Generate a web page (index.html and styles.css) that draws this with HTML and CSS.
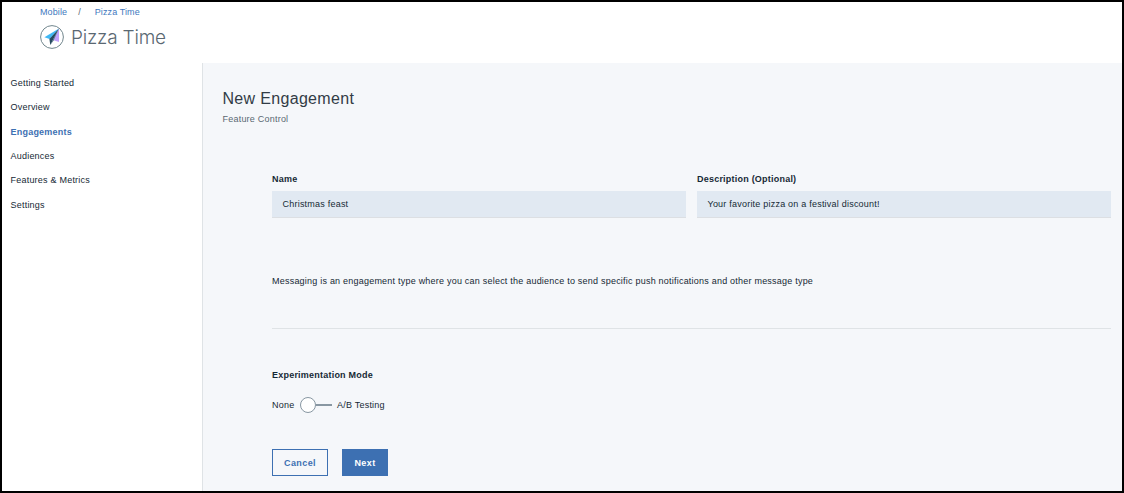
FILE: index.html
```html
<!DOCTYPE html>
<html lang="en">
<head>
<meta charset="utf-8">
<title>Pizza Time</title>
<link rel="stylesheet" href="styles.css">
</head>
<body>
<div class="app">
  <header class="header">
    <nav class="breadcrumb"><a>Mobile</a><span class="slash">/</span><a>Pizza Time</a></nav>
    <div class="brand">
      <svg class="logo" viewBox="0 0 24 24" width="24" height="24">
        <circle cx="12" cy="12" r="11.4" fill="#fff" stroke="#71868d" stroke-width="1"/>
        <path d="M19 3.4V17L13.5 15.2Z" fill="#c0a0fb"/>
        <path d="M19 3.4L4.4 12.3L9.6 14Z" fill="#3fb8f5"/>
        <path d="M19 3.4L9.4 14L10.3 20Z" fill="#264a60"/>
        <path d="M19 3.4L10.3 20L13.6 15.4Z" fill="#40647c"/>
      </svg>
      <h1 class="app-name">Pizza Time</h1>
    </div>
  </header>
  <div class="body">
    <ul class="sidebar">
      <li>Getting Started</li>
      <li>Overview</li>
      <li class="active">Engagements</li>
      <li>Audiences</li>
      <li>Features &amp; Metrics</li>
      <li>Settings</li>
    </ul>
    <main class="main">
      <h2 class="title">New Engagement</h2>
      <p class="subtitle">Feature Control</p>
      <form class="form">
        <div class="fields">
          <div class="field"><label class="label">Name</label><div class="input">Christmas feast</div></div>
          <div class="field"><label class="label">Description (Optional)</label><div class="input">Your favorite pizza on a festival discount!</div></div>
        </div>
        <p class="info">Messaging is an engagement type where you can select the audience to send specific push notifications and other message type</p>
        <div class="label mode">Experimentation Mode</div>
        <div class="toggle"><span>None</span><span class="switch"><i class="knob"></i><i class="track"></i></span><span>A/B Testing</span></div>
        <div class="actions"><button type="button" class="btn cancel">Cancel</button><button type="button" class="btn next">Next</button></div>
      </form>
    </main>
  </div>
</div>
</body>
</html>
```
FILE: styles.css
```css
* { box-sizing: border-box; margin: 0; padding: 0; }
body { font: 9px/12px "Liberation Sans", Arial, sans-serif; letter-spacing: 0.22px; color: #152935; background: #fff; }
.app { width: 1124px; height: 493px; border: 2px solid #000; display: flex; flex-direction: column; overflow: hidden; }
.header { height: 61px; padding: 4px 0 0 38px; }
.breadcrumb { display: flex; letter-spacing: 0.1px; color: #4178be; }
.slash { margin: 0 14px 0 11px; color: #5a6872; }
.brand { display: flex; align-items: center; margin-top: 7px; gap: 7px; }
.app-name { padding-top: 1px; font-family: Inter, "Liberation Sans", sans-serif; font-weight: 300; font-size: 19px; line-height: 23px; letter-spacing: -0.2px; color: #5a6872; }
.body { flex: 1; display: flex; }
.sidebar { width: 201px; border-right: 1px solid #dfe3e6; list-style: none; padding: 14px 0 0 8.5px; }
.sidebar li { height: 24.35px; }
.sidebar .active { color: #3d70b2; font-weight: 700; }
.main { flex: 1; background: #f5f7fa; padding: 26px 11px 0 19.5px; }
.title { font-weight: 400; font-size: 16px; line-height: 20px; letter-spacing: 0.32px; color: #323c46; }
.subtitle { margin-top: 4px; color: #5a6872; }
.form { margin: 48px 0 0 49.5px; }
.fields { display: grid; grid-template-columns: 1fr 1fr; column-gap: 11px; }
.label { display: block; font-weight: 700; }
.input { margin-top: 6px; height: 27px; padding: 7px 10.5px; background: #e1e9f2; border-bottom: 1px solid #dcdfe3; }
.info { height: 111px; padding-top: 57px; border-bottom: 1px solid #dfe3e6; }
.mode { margin-top: 40px; }
.toggle { display: flex; align-items: center; height: 16px; margin-top: 16px; gap: 5.3px; }
.switch { display: flex; align-items: center; width: 32px; }
.knob { width: 16px; height: 16px; border: 1px solid #8897a2; border-radius: 50%; background: #fff; }
.track { flex: 1; height: 2px; background: #8897a2; }
.actions { display: flex; gap: 14px; margin-top: 36px; }
.btn { height: 27px; font: 700 9px/12px "Liberation Sans", Arial, sans-serif; letter-spacing: 0.4px; border: 1px solid #3d70b2; }
.cancel { width: 56px; background: transparent; color: #3d70b2; }
.next { width: 46px; background: #3d70b2; color: #fff; }
```
